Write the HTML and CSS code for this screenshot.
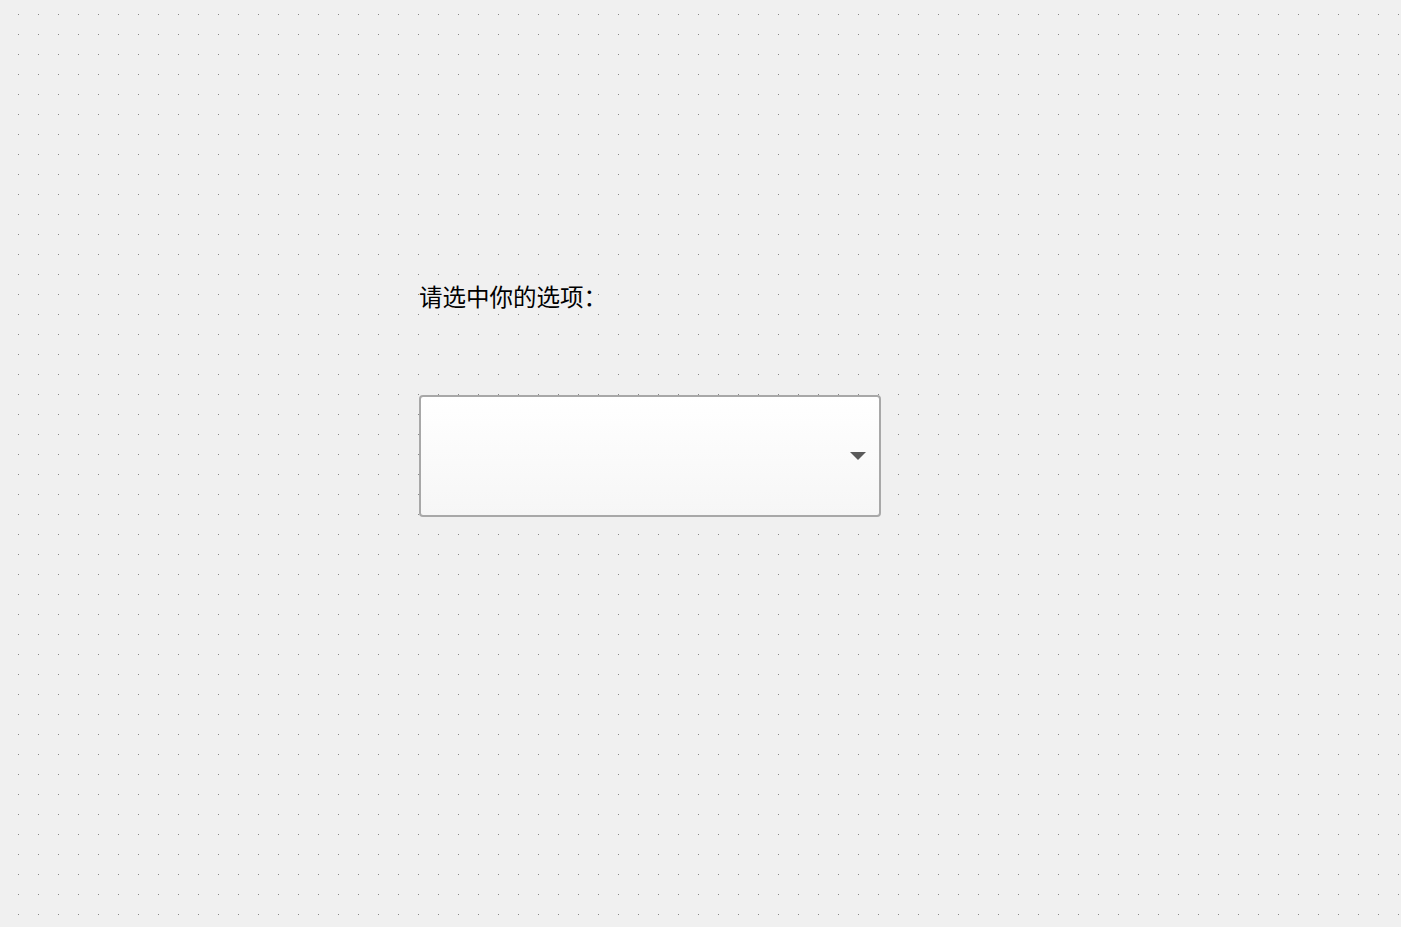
FILE: index.html
```html
<!DOCTYPE html>
<html lang="zh-CN">
<head>
    <meta charset="UTF-8">
    <meta name="viewport" content="width=device-width, initial-scale=1.0">
    <title>选项</title>
    <link rel="stylesheet" href="styles.css">
</head>
<body>
    <div class="page">
        <div class="picker">
            <label class="picker-label" for="choice">请选中你的选项：</label>
            <div class="select-box" id="choice" tabindex="0">
                <svg class="select-arrow" width="16" height="8" viewBox="0 0 16 8">
                    <polygon points="0,0 16,0 8,8" fill="#5a5a5a"/>
                </svg>
            </div>
        </div>
    </div>
</body>
</html>
```

FILE: styles.css
```css
html, body {
    margin: 0;
    height: 100%;
}

body {
    background-color: #f0f0f0;
    /* dotted grid, 1px dot every 20px */
    background-image: url("data:image/svg+xml,%3Csvg xmlns='http://www.w3.org/2000/svg' width='20' height='20' shape-rendering='crispEdges'%3E%3Crect x='18' y='14' width='1' height='1' fill='%23888888'/%3E%3C/svg%3E");
    background-size: 20px 20px;
    font-family: "Noto Sans CJK SC", "Liberation Sans", sans-serif;
}

.page {
    padding: 280px 0 0 419px;
}

.picker {
    width: 462px;
}

.picker-label {
    display: block;
    font-size: 23.5px;
    line-height: 32px;
    color: #000;
    margin-bottom: 83px;
}

.select-box {
    box-sizing: border-box;
    height: 122px;
    border: 2px solid #a8a8a8;
    border-radius: 4px;
    background: linear-gradient(to bottom, #ffffff, #f6f6f6);
    display: flex;
    justify-content: flex-end;
    align-items: center;
    padding-right: 13px;
    outline: none;
}

.select-arrow {
    display: block;
}
```
